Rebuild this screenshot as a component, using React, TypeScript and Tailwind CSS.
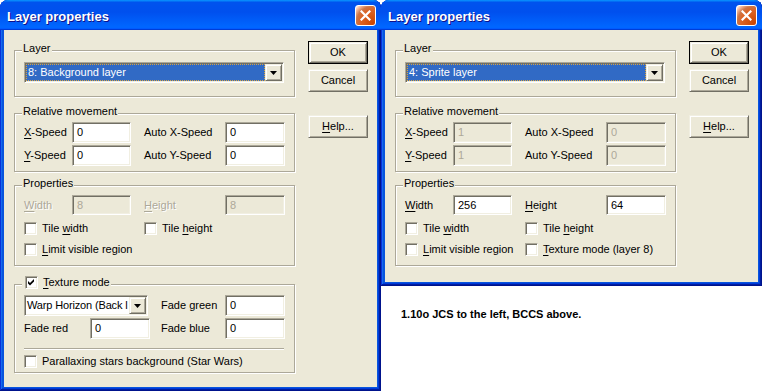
import React from "react";

const SUNKEN =
  "border border-t-[#aca899] border-l-[#aca899] border-b-white border-r-white shadow-[inset_1px_1px_0_#716f64,inset_-1px_-1px_0_#f1efe2]";
const RAISED =
  "border border-t-[#f1efe2] border-l-[#f1efe2] border-b-[#716f64] border-r-[#716f64] shadow-[inset_1px_1px_0_#fff,inset_-1px_-1px_0_#aca899]";
const DIS = "text-[#aca899] [text-shadow:1px_1px_0_#fff]";

function U({ children }: { children: React.ReactNode }) {
  return <span className="underline underline-offset-[2px]">{children}</span>;
}

function Edit({ value, w, disabled, tall = true }: { value: string; w: string; disabled?: boolean; tall?: boolean }) {
  return (
    <div
      className={`${w} ${tall ? "h-[21px]" : "h-[20px]"} ${SUNKEN} shrink-0 flex items-center pl-[4px] ${
        disabled ? "bg-[#ece9d8] text-[#aca899]" : "bg-white text-black"
      }`}
    >
      {value}
    </div>
  );
}

function Arrow() {
  return (
    <div className={`w-[17px] h-[17px] shrink-0 bg-[#ece9d8] ${RAISED} flex items-center justify-center`}>
      <svg width="7" height="4" viewBox="0 0 7 4">
        <path d="M0 0h7L3.5 4z" fill="#000" />
      </svg>
    </div>
  );
}

function Combo({ text, w, selected }: { text: string; w: string; selected?: boolean }) {
  return (
    <div className={`${w} h-[21px] ${SUNKEN} bg-white flex p-[1px] shrink-0`}>
      <div
        className={`flex-1 min-w-0 flex items-center overflow-hidden whitespace-nowrap ${
          selected
            ? "bg-[#316ac5] text-white border border-dotted border-[#d9a441] pl-[1px]"
            : "pl-[1px] text-black tracking-[-0.15px]"
        }`}
      >
        {text}
      </div>
      <Arrow />
    </div>
  );
}

function Check({ checked }: { checked?: boolean }) {
  return (
    <div className={`w-[13px] h-[13px] shrink-0 bg-white ${SUNKEN} flex items-center justify-center`}>
      {checked && (
        <svg width="7" height="7" viewBox="0 0 7 7">
          <path d="M0 2L2 4L6 0V2.6L2 6.6L0 4.6Z" fill="#000" />
        </svg>
      )}
    </div>
  );
}

function CheckItem({ label, checked, w }: { label: React.ReactNode; checked?: boolean; w?: string }) {
  return (
    <div className={`flex items-center gap-[5px] h-[13px] ${w ?? ""}`}>
      <Check checked={checked} />
      <span className="whitespace-nowrap">{label}</span>
    </div>
  );
}

function Group({ label, h, pt, children }: { label: React.ReactNode; h: string; pt: string; children: React.ReactNode }) {
  return (
    <div
      className={`relative w-[281px] ${h} ${pt} pl-[9px] border border-[#aca899] shadow-[inset_1px_1px_0_#fff,1px_1px_0_#fff] shrink-0`}
    >
      <div className="absolute left-[7px] -top-[9px] h-[13px] px-[1px] bg-[#ece9d8] flex items-center whitespace-nowrap">
        {label}
      </div>
      {children}
    </div>
  );
}

function Button({ children, def, mt }: { children: React.ReactNode; def?: boolean; mt: string }) {
  return (
    <div className={`w-[60px] h-[23px] ${mt} ${def ? "border border-black" : ""}`}>
      <div className={`w-full h-full ${RAISED} bg-[#ece9d8] flex items-center justify-center`}>{children}</div>
    </div>
  );
}

function TitleBar() {
  return (
    <div className="h-[30px] shrink-0 flex items-start pl-[7px] pr-[5px] rounded-t-[8px] bg-[linear-gradient(180deg,#0997ff,#0053ee_8%,#0050ee_40%,#0066ff_88%,#0066ff_93%,#005bff_95%,#003dd7_96%,#003dd7)]">
      <span className="flex-1 mt-[9px] leading-[16px] text-white font-bold text-[13px] font-['Trebuchet_MS','Liberation_Sans',sans-serif] [text-shadow:1px_1px_#0f1089]">
        Layer properties
      </span>
      <div className="mt-[5px] w-[21px] h-[21px] rounded-[3px] border border-white bg-[radial-gradient(circle_at_90%_90%,#cc4600_0%,#dc6527_55%,#cd7546_70%,#ffccb2_90%,#fff_100%)] flex items-center justify-center">
        <svg width="11" height="11" viewBox="0 0 11 11">
          <path d="M1.5 1.5L9.5 9.5M9.5 1.5L1.5 9.5" stroke="#fff" strokeWidth="2.2" strokeLinecap="square" />
        </svg>
      </div>
    </div>
  );
}

function Buttons() {
  return (
    <div className="ml-[13px] pt-[11px] flex flex-col">
      <Button def mt="">OK</Button>
      <Button mt="mt-[5px]">Cancel</Button>
      <Button mt="mt-[23px]">
        <span>
          <U>H</U>elp...
        </span>
      </Button>
    </div>
  );
}

function Dialog({ h, children }: { h: string; children: React.ReactNode }) {
  return (
    <div
      className={`w-[381px] ${h} shrink-0 flex flex-col rounded-t-[8px] bg-[#0855dd] shadow-[inset_-1px_-1px_#00138c,inset_1px_1px_#0831d9,inset_-2px_-2px_#001ea0,inset_2px_2px_#166aee,inset_-3px_-3px_#003bda,inset_3px_3px_#0855dd]`}
    >
      <TitleBar />
      <div className="flex-1 mx-[4px] mb-[4px] bg-[#ece9d8] flex text-[11px] leading-[13px] text-black">
        <div className="pl-[10px] pt-[20px] flex flex-col">{children}</div>
        <Buttons />
      </div>
    </div>
  );
}

function SpeedRows({ disabled, x, y, ax, ay }: { disabled?: boolean; x: string; y: string; ax: string; ay: string }) {
  return (
    <div className="flex flex-col gap-[2px]">
      <div className="flex items-center h-[21px]">
        <span className="w-[48px]">
          <U>X</U>-Speed
        </span>
        <Edit value={x} w="w-[59px]" disabled={disabled} />
        <span className="w-[81px] ml-[13px]">Auto X-Speed</span>
        <Edit value={ax} w="w-[60px]" disabled={disabled} />
      </div>
      <div className="flex items-center h-[21px]">
        <span className="w-[48px]">
          <U>Y</U>-Speed
        </span>
        <Edit value={y} w="w-[59px]" disabled={disabled} />
        <span className="w-[81px] ml-[13px]">Auto Y-Speed</span>
        <Edit value={ay} w="w-[60px]" disabled={disabled} />
      </div>
    </div>
  );
}

function LeftDialog() {
  return (
    <Dialog h="h-[391px]">
      <Group label="Layer" h="h-[47px]" pt="pt-[11px]">
        <Combo text="8: Background layer" w="w-[260px]" selected />
      </Group>
      <div className="mt-[16px]">
        <Group label="Relative movement" h="h-[59px]" pt="pt-[8px]">
          <SpeedRows x="0" y="0" ax="0" ay="0" />
        </Group>
      </div>
      <div className="mt-[13px]">
        <Group label="Properties" h="h-[81px]" pt="pt-[9px]">
          <div className="flex items-center h-[20px]">
            <span className={`w-[48px] ${DIS}`}>
              <U>W</U>idth
            </span>
            <Edit value="8" w="w-[59px]" disabled tall={false} />
            <span className={`w-[81px] ml-[13px] ${DIS}`}>
              <U>H</U>eight
            </span>
            <Edit value="8" w="w-[60px]" disabled tall={false} />
          </div>
          <div className="mt-[7px] flex">
            <CheckItem
              w="w-[120px]"
              label={
                <>
                  Tile <U>w</U>idth
                </>
              }
            />
            <CheckItem
              label={
                <>
                  Tile <U>h</U>eight
                </>
              }
            />
          </div>
          <div className="mt-[8px] flex">
            <CheckItem
              label={
                <>
                  <U>L</U>imit visible region
                </>
              }
            />
          </div>
        </Group>
      </div>
      <div className="mt-[18px]">
        <Group
          label={
            <div className="flex items-center gap-[5px] pl-[2px]">
              <Check checked />
              <span>
                <U>T</U>exture mode
              </span>
            </div>
          }
          h="h-[89px]"
          pt="pt-[10px]"
        >
          <div className="flex flex-col gap-[2px]">
            <div className="flex items-center h-[21px]">
              <Combo text="Warp Horizon (Back l" w="w-[124px]" />
              <span className="w-[64px] ml-[13px]">Fade green</span>
              <Edit value="0" w="w-[60px]" />
            </div>
            <div className="flex items-center h-[21px]">
              <span className="w-[66px]">Fade red</span>
              <Edit value="0" w="w-[60px]" />
              <span className="w-[64px] ml-[11px]">Fade blue</span>
              <Edit value="0" w="w-[60px]" />
            </div>
          </div>
          <div className="mt-[9px] w-[260px] h-[2px] border-t border-t-[#aca899] border-b border-b-white" />
          <div className="mt-[5px]">
            <CheckItem label="Parallaxing stars background (Star Wars)" />
          </div>
        </Group>
      </div>
    </Dialog>
  );
}

function RightDialog() {
  return (
    <Dialog h="h-[286px]">
      <Group label="Layer" h="h-[47px]" pt="pt-[11px]">
        <Combo text="4: Sprite layer" w="w-[260px]" selected />
      </Group>
      <div className="mt-[16px]">
        <Group label="Relative movement" h="h-[59px]" pt="pt-[8px]">
          <SpeedRows disabled x="1" y="1" ax="0" ay="0" />
        </Group>
      </div>
      <div className="mt-[13px]">
        <Group label="Properties" h="h-[81px]" pt="pt-[9px]">
          <div className="flex items-center h-[20px]">
            <span className="w-[48px]">
              <U>W</U>idth
            </span>
            <Edit value="256" w="w-[59px]" tall={false} />
            <span className="w-[81px] ml-[13px]">
              <U>H</U>eight
            </span>
            <Edit value="64" w="w-[60px]" tall={false} />
          </div>
          <div className="mt-[7px] flex">
            <CheckItem
              w="w-[120px]"
              label={
                <>
                  Tile <U>w</U>idth
                </>
              }
            />
            <CheckItem
              label={
                <>
                  Tile <U>h</U>eight
                </>
              }
            />
          </div>
          <div className="mt-[8px] flex">
            <CheckItem
              w="w-[120px]"
              label={
                <>
                  <U>L</U>imit visible region
                </>
              }
            />
            <CheckItem
              label={
                <>
                  <U>T</U>exture mode (layer 8)
                </>
              }
            />
          </div>
        </Group>
      </div>
    </Dialog>
  );
}

export default function App() {
  return (
    <div className="w-[762px] h-[391px] bg-white flex overflow-hidden font-['Liberation_Sans',Arial,sans-serif]">
      <LeftDialog />
      <div className="flex flex-col">
        <RightDialog />
        <p className="mt-[22px] pl-[20px] text-[11px] leading-[13px] font-bold text-black">
          1.10o JCS to the left, BCCS above.
        </p>
      </div>
    </div>
  );
}
